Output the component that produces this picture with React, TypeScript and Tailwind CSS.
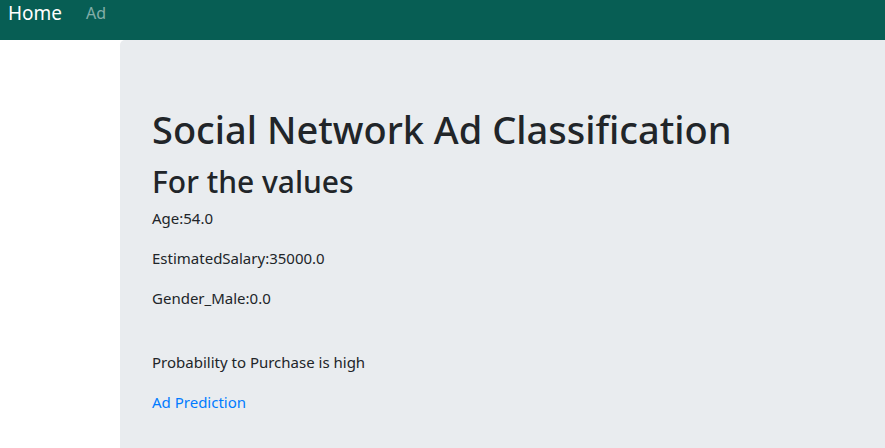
export default function App() {
  return (
    <div className="min-h-[448px] overflow-hidden bg-white font-['Noto_Sans',sans-serif] text-[#212529]">
      <nav className="flex h-10 items-start gap-6 bg-[#075e54] px-2">
        <a className="text-[19px] leading-[26px] text-white">Home</a>
        <a className="text-[16px] leading-[26px] text-white/50">Ad</a>
      </nav>
      <div className="ml-[120px] min-h-[408px] rounded-tl-[5px] bg-[#e9ecef] px-8 pt-[67px]">
        <h1 className="mb-[11px] text-[38px] font-medium leading-[1.2]">Social Network Ad Classification</h1>
        <h2 className="mb-[6px] text-[30px] font-medium leading-[1.2]">For the values</h2>
        <p className="mb-4 text-[15px] leading-6">Age:54.0</p>
        <p className="mb-4 text-[15px] leading-6">EstimatedSalary:35000.0</p>
        <p className="mb-4 text-[15px] leading-6">Gender_Male:0.0</p>
        <div className="h-6" />
        <p className="mb-4 text-[15px] leading-6">Probability to Purchase is high</p>
        <a className="text-[15px] leading-6 text-[#007bff]">Ad Prediction</a>
      </div>
    </div>
  );
}
